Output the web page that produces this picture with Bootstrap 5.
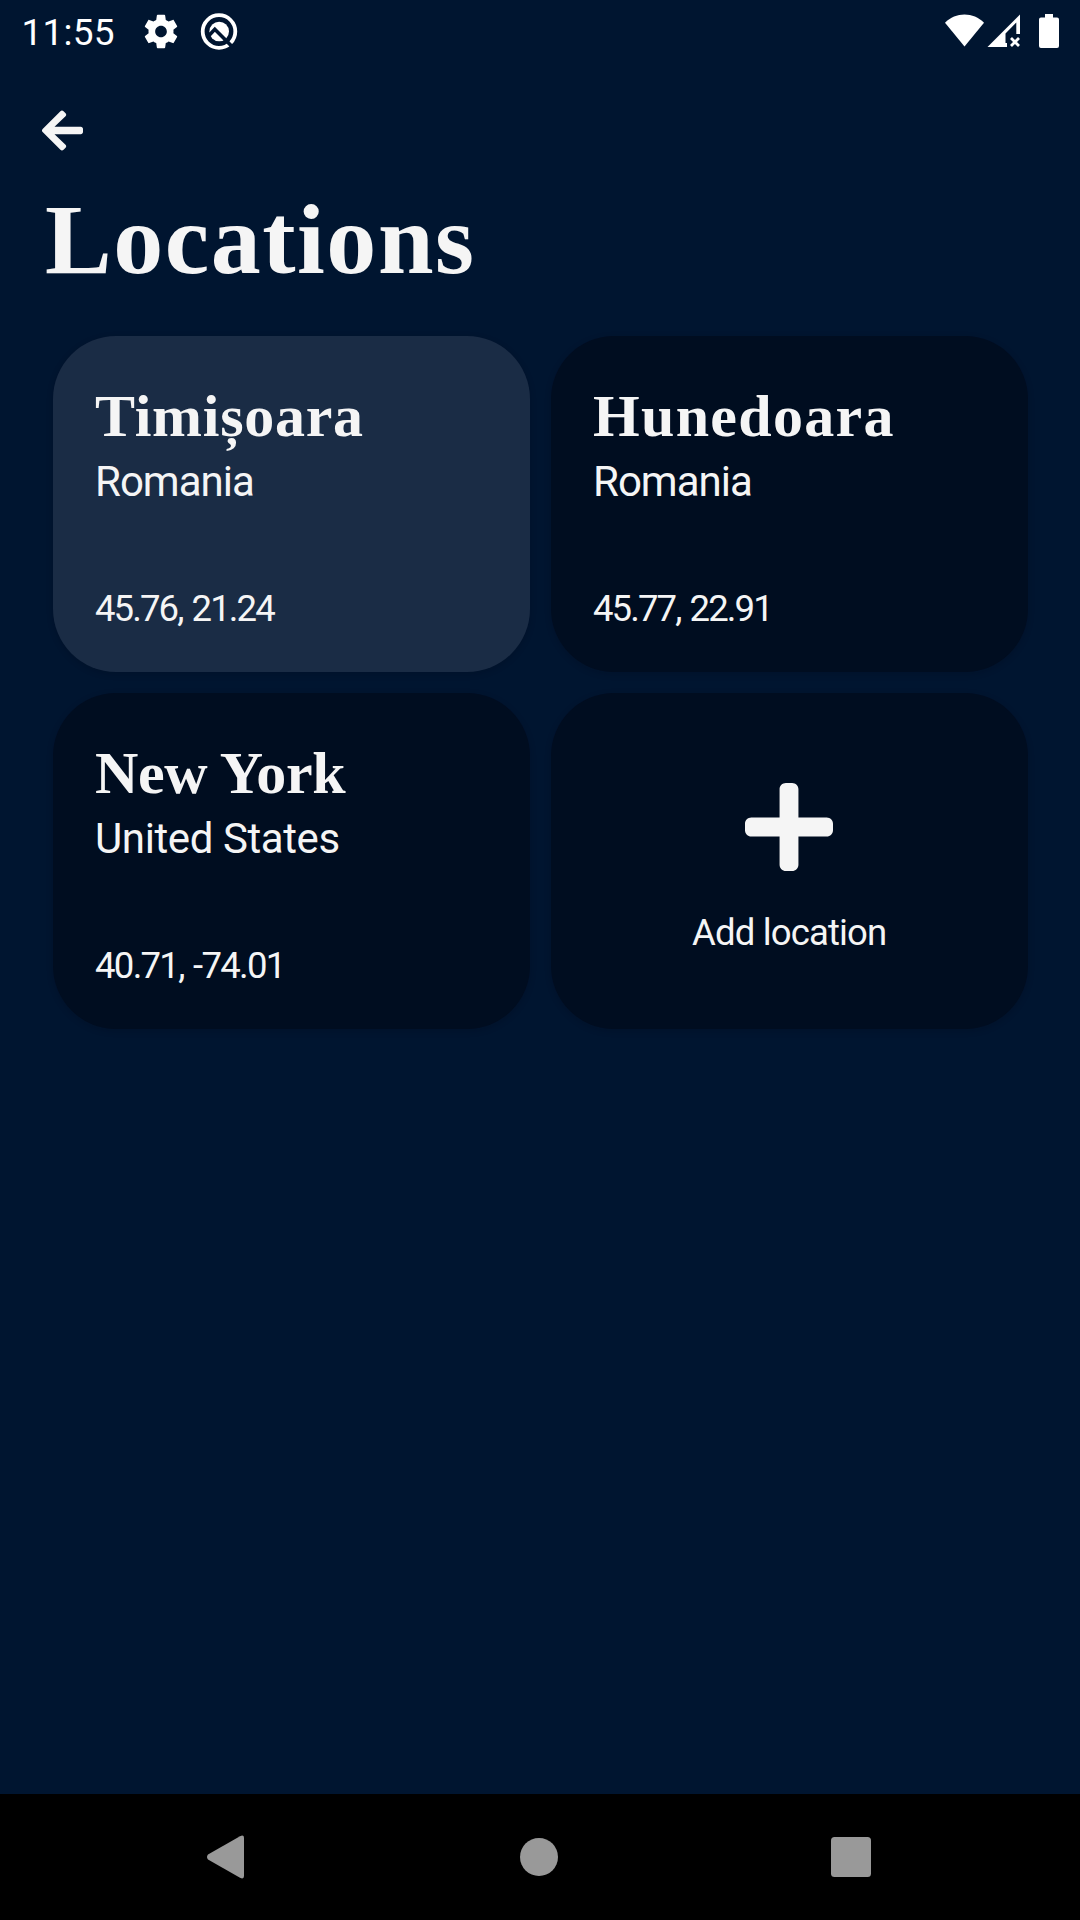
<!DOCTYPE html>
<html lang="en" data-bs-theme="dark">
<head>
<meta charset="utf-8">
<meta name="viewport" content="width=device-width, initial-scale=1">
<title>Locations</title>
<link href="https://cdn.jsdelivr.net/npm/bootstrap@5.3.0/dist/css/bootstrap.min.css" rel="stylesheet">
<style>
  body { background: #001530; color: #f5f5f5; font-family: Roboto, sans-serif; }
  svg { display: block; flex: none; }
  .app { height: 1920px; }
  .status-bar { height: 64px; padding: 8px 16px 0 21.5px; color: #fff; }
  .clock { font-size: 37px; line-height: 50px; letter-spacing: .2px; width: 116px; }
  .status-left { margin-left: 2.5px; }
  .back-btn { padding: 0; margin: 43px 0 0 42px; color: #f5f5f5; border: 0; align-self: flex-start; }
  .page-title { font: bold 100px/112px "Liberation Serif", serif; letter-spacing: 1.53px; margin: 30px 0 0 45px; color: #f5f5f5; }
  .tiles { gap: 21px; margin: 40px 52px 0 53px; }
  .tile-row { gap: 21px; }
  .tile { flex: 1 1 0; height: 336px; border-radius: 63px; background: #000d20; border: 0; color: #f5f5f5;
          padding: 42px 43px 41px 42px; box-shadow: 0 2px 6px rgba(0, 8, 24, .22); }
  .tile.selected { background: #1a2c45; }
  .tile.add-tile { padding: 57px 43px 41px; }
  .city { font: bold 60px/76px "Liberation Serif", serif; margin: 0 0 3px; white-space: nowrap; color: #f5f5f5; }
  .country { font-size: 42px; line-height: 50px; letter-spacing: -.98px; margin: 0; white-space: nowrap; }
  .coords { font-size: 36.5px; line-height: 44px; letter-spacing: -1.9px; word-spacing: 2px; margin: auto 0 0; }
  .ls-timisoara { letter-spacing: .72px; }
  .ls-hunedoara { letter-spacing: 1.31px; }
  .ls-newyork { letter-spacing: -.3px; }
  .ls-us { letter-spacing: -.4px; }
  .ls-ny-coords { letter-spacing: -1.7px; }
  .add-label { font-size: 36.5px; line-height: 44px; letter-spacing: -.85px; margin-top: 40px; }
  .nav-bar { height: 126px; background: #000; padding: 0 209px 0 207px; color: #999; }
  .nav-home { margin-left: 3px; }
</style>
</head>
<body>
<div class="app d-flex flex-column overflow-hidden">
  <header class="status-bar d-flex align-items-start">
    <span class="clock">11:55</span>
    <svg class="status-left" width="104" height="48" viewBox="0 0 104 48" fill="#fff">
      <path transform="translate(1 3.5) scale(1.667)" d="M19.43 12.98c.04-.32.07-.64.07-.98s-.03-.66-.07-.98l2.11-1.65c.19-.15.24-.42.12-.64l-2-3.46c-.12-.22-.39-.3-.61-.22l-2.49 1c-.52-.4-1.08-.73-1.69-.98l-.38-2.65C14.46 2.18 14.25 2 14 2h-4c-.25 0-.46.18-.49.42l-.38 2.65c-.61.25-1.17.59-1.69.98l-2.49-1c-.23-.09-.49 0-.61.22l-2 3.46c-.13.22-.07.49.12.64l2.11 1.65c-.04.32-.07.65-.07.98s.03.66.07.98l-2.11 1.65c-.19.15-.24.42-.12.64l2 3.46c.12.22.39.3.61.22l2.49-1c.52.4 1.08.73 1.69.98l.38 2.65c.03.24.24.42.49.42h4c.25 0 .46-.18.49-.42l.38-2.65c.61-.25 1.17-.59 1.69-.98l2.49 1c.23.09.49 0 .61-.22l2-3.46c.12-.22.07-.49-.12-.64l-2.11-1.65zM12 15.5c-1.93 0-3.5-1.57-3.5-3.5s1.57-3.5 3.5-3.5 3.5 1.57 3.5 3.5-1.57 3.5-3.5 3.500z"/>
      <circle cx="79" cy="23.500" r="16.300" fill="none" stroke="#fff" stroke-width="3.800"/>
      <circle cx="79.200" cy="23.500" r="9.800"/>
      <path d="M69 27.500 74.800 21.300 93 39.500" fill="none" stroke="#001530" stroke-width="3.600"/>
    </svg>
    <svg class="ms-auto" width="124" height="48" viewBox="0 0 124 48" fill="#fff">
      <path d="M5 14.800C15.500 3.700 33.500 3.700 44 14.800L24.500 38.500Z"/>
      <path fill-rule="evenodd" d="M47.500 39 80 6.500V26H76.300V14.500L65.500 25.500V35H67V39Z"/>
      <path d="m71 30 8 8m0-8-8 8" stroke="#fff" stroke-width="2.800" fill="none"/>
      <path d="M105 6h8v3.500h4q2 0 2 2V38q0 2-2 2h-16q-2 0-2-2V11.500q0-2 2-2h4Z"/>
    </svg>
  </header>

  <main class="flex-grow-1 d-flex flex-column">
    <button class="back-btn btn" type="button" aria-label="Back">
      <svg width="41" height="47" viewBox="0 0 448 512" fill="currentColor"><path d="M257.500 445.100l-22.200 22.200c-9.400 9.400-24.600 9.400-33.900 0L7 273c-9.400-9.400-9.400-24.600 0-33.900L201.400 44.700c9.400-9.400 24.600-9.400 33.900 0l22.200 22.200c9.500 9.500 9.300 25-.4 34.300L136.600 216H424c13.300 0 24 10.700 24 24v32c0 13.300-10.700 24-24 24H136.600l120.500 114.800c9.800 9.300 10 24.800.4 34.300z"/></svg>
    </button>
    <h1 class="page-title">Locations</h1>

    <section class="tiles d-flex flex-column">
      <div class="tile-row d-flex">
        <article class="tile selected d-flex flex-column">
          <h2 class="city ls-timisoara">Timișoara</h2>
          <p class="country">Romania</p>
          <p class="coords">45.76, 21.24</p>
        </article>
        <article class="tile d-flex flex-column">
          <h2 class="city ls-hunedoara">Hunedoara</h2>
          <p class="country">Romania</p>
          <p class="coords">45.77, 22.91</p>
        </article>
      </div>
      <div class="tile-row d-flex">
        <article class="tile d-flex flex-column">
          <h2 class="city ls-newyork">New York</h2>
          <p class="country ls-us">United States</p>
          <p class="coords ls-ny-coords">40.71, -74.01</p>
        </article>
        <button class="tile add-tile d-flex flex-column align-items-center justify-content-center" type="button">
          <svg width="88" height="88" viewBox="0 32 448 448" fill="currentColor"><path d="M416 208H272V64c0-17.670-14.330-32-32-32h-32c-17.670 0-32 14.330-32 32v144H32c-17.670 0-32 14.330-32 32v32c0 17.670 14.330 32 32 32h144v144c0 17.670 14.330 32 32 32h32c17.670 0 32-14.330 32-32V304h144c17.670 0 32-14.330 32-32v-32c0-17.670-14.330-32-32-32z"/></svg>
          <span class="add-label">Add location</span>
        </button>
      </div>
    </section>
  </main>

  <nav class="nav-bar d-flex align-items-center justify-content-between">
    <svg width="37" height="44" viewBox="0 0 37 44" fill="currentColor"><path d="M1 19.500 33 1.200Q37-.8 37 3v38q0 3.800-4 1.800L1 24.500q-2-2.500 0-5Z"/></svg>
    <svg class="nav-home" width="38" height="38" viewBox="0 0 38 38" fill="currentColor"><circle cx="19" cy="19" r="19"/></svg>
    <svg width="40" height="40" viewBox="0 0 40 40" fill="currentColor"><rect width="40" height="40" rx="3.500"/></svg>
  </nav>
</div>
<script src="https://cdn.jsdelivr.net/npm/bootstrap@5.3.0/dist/js/bootstrap.bundle.min.js"></script>
</body>
</html>
